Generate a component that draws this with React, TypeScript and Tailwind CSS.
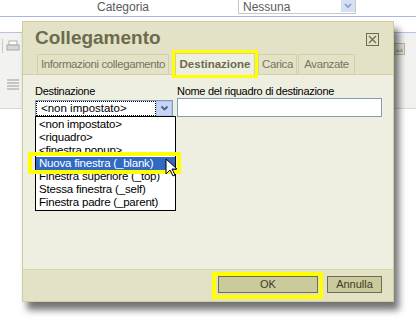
import { ReactNode } from 'react';

const ui = { fontFamily: '"Liberation Sans", Arial, sans-serif' };

function Tab({ children, active, w }: { children: ReactNode; active?: boolean; w: string }) {
    if (active) {
        return (
            <div
                className={`relative h-[22px] ${w} flex items-center justify-center bg-[#efefe1] border border-b-0 border-[#d3d2a6] text-[11.5px] font-bold text-[#6b6b4d] outline-[3px] outline-[#ffff00] -mb-px`}
            >
                {children}
            </div>
        );
    }
    return (
        <div
            className={`h-[20px] ${w} flex items-center justify-center bg-[#e3e2c7] border border-b-0 border-[#d3d2a6] text-[11.5px] tracking-[-0.4px] text-[#75755f]`}
        >
            {children}
        </div>
    );
}

const options = [
    '<non impostato>',
    '<riquadro>',
    '<finestra popup>',
    'Nuova finestra (_blank)',
    'Finestra superiore (_top)',
    'Stessa finestra (_self)',
    'Finestra padre (_parent)',
];

export default function App() {
    return (
        <div className="relative w-[416px] h-[330px] overflow-hidden bg-white" style={ui}>
            {/* page behind the dialog */}
            <div className="h-[17px] flex items-start border-b border-[#a9b6e2]">
                <div className="w-[238px] pl-[97px] pt-[1px] text-[12px] leading-[12px] text-[#5a5a5a]">Categoria</div>
                <div className="w-[118px] h-[14px] flex border border-[#c8c8c8] border-t-0">
                    <div className="flex-1 pl-[4px] pt-[1px] text-[12px] leading-[12px] text-[#5a5a5a]">Nessuna</div>
                    <div className="w-[14px] h-[12px] bg-[#d6e0f5] flex items-center justify-center">
                        <svg width="8" height="6" viewBox="0 0 8 6">
                            <path d="M1 1l3 3 3-3" stroke="#8a9ac0" strokeWidth="1.6" fill="none" />
                        </svg>
                    </div>
                </div>
            </div>
            <div className="h-[16px] border-b border-[#b8c2e8]" />
            <div className="h-[76px] bg-[#f2f2f0] border-b border-[#d8d8d8] flex">
                <div className="flex flex-col gap-[14px] pl-[2px] pt-[6px]">
                    <div className="flex items-center gap-[3px]">
                        <div className="w-px h-[14px] bg-[#c8c8c8]" />
                        <svg width="14" height="12" viewBox="0 0 14 12">
                            <rect x="3" y="1" width="8" height="4" fill="#fff" stroke="#b0b0b0" />
                            <rect x="1" y="5" width="12" height="5" fill="#d8d8d8" stroke="#a8a8a8" />
                        </svg>
                    </div>
                    <svg width="14" height="12" viewBox="0 0 14 12" className="ml-[4px] mt-[12px]">
                        <path d="M1 1h12M1 4h12M1 7h12M1 10h12" stroke="#9a9a9a" />
                    </svg>
                </div>
                <div className="flex-1" />
                <svg width="12" height="12" viewBox="0 0 12 12" className="mt-[10px] mr-[11px]">
                    <rect x="0.5" y="0.5" width="11" height="11" fill="#e2e2d8" stroke="#b8b8b0" />
                    <path d="M2 9l3-3 2 2 2-3 1 4z" fill="#a8b89a" />
                </svg>
            </div>

            {/* dialog */}
            <div className="absolute left-[22px] top-[21px] w-[372px] h-[281px] flex flex-col bg-[#e3e2c7] border border-[#cfcd9c] shadow-[5px_8px_7px_rgba(0,0,0,0.55)]">
                <div className="h-[31px] flex items-start justify-between pl-[12px] pr-[14px] pt-[5px]">
                    <div className="text-[19px] leading-[22px] font-bold text-[#6b6b4d]">Collegamento</div>
                    <svg width="13" height="13" viewBox="0 0 13 13" className="mt-[6px]">
                        <rect x="0.5" y="0.5" width="12" height="12" fill="none" stroke="#6b6b4d" />
                        <path d="M3 3l7 7M10 3l-7 7" stroke="#6b6b4d" strokeWidth="1.2" />
                    </svg>
                </div>
                <div className="h-[22px] flex items-end gap-[6px] pl-[14px] border-b border-[#d3d2a6]">
                    <Tab w="w-[132px]">Informazioni collegamento</Tab>
                    <div className="flex items-end gap-[3px]">
                        <Tab w="w-[80px]" active>
                            Destinazione
                        </Tab>
                        <div className="flex items-end gap-px">
                            <Tab w="w-[39px]">Carica</Tab>
                            <Tab w="w-[57px]">Avanzate</Tab>
                        </div>
                    </div>
                </div>
                <div className="flex-1 bg-[#efefe1] flex gap-[4px] pl-[12px] pt-[9px] text-[11px] text-black">
                    <div className="w-[138px] flex flex-col">
                        <div className="leading-[14px] tracking-[-0.3px]">Destinazione</div>
                        <div className="relative mt-[2px] h-[17px] flex border border-[#7f9db9] bg-white">
                            <div className="flex-1 flex items-center pl-[4px] border border-dotted border-black text-[11.5px] leading-[13px]">
                                &lt;non impostato&gt;
                            </div>
                            <div className="w-[16px] bg-[#c6d4f7] border border-[#b4c6ef] flex items-center justify-center">
                                <svg width="9" height="7" viewBox="0 0 9 7">
                                    <path d="M1.5 1.5l3 3 3-3" stroke="#4d6185" strokeWidth="1.8" fill="none" />
                                </svg>
                            </div>
                            <div className="absolute left-[-1px] top-full w-[141px] bg-white border border-black py-px">
                                {options.map((o, i) =>
                                    i === 3 ? (
                                        <div key={o} className="relative h-[13px] bg-[#316ac5] text-white pl-[3px] text-[11.5px] leading-[13px] tracking-[-0.2px]">
                                            {o}
                                            <span className="absolute -left-[8px] -right-[6px] -top-[5px] -bottom-[4px] border-4 border-[#ffff00]" />
                                            <svg width="12" height="20" viewBox="0 0 12 20" className="absolute left-[129px] top-[1px]">
                                                <path d="M1 1v15l4-4 3 6 2-1-3-6h5z" fill="#fff" stroke="#000" strokeWidth="1" />
                                            </svg>
                                        </div>
                                    ) : (
                                        <div key={o} className="h-[13px] pl-[3px] text-[11.5px] leading-[13px] tracking-[-0.2px]">
                                            {o}
                                        </div>
                                    ),
                                )}
                            </div>
                        </div>
                    </div>
                    <div className="w-[205px] flex flex-col">
                        <div className="leading-[14px] tracking-[-0.3px]">Nome del riquadro di destinazione</div>
                        <div className="h-[19px] bg-white border border-[#7f9db9]" />
                    </div>
                </div>
                <div className="h-[32px] flex items-start justify-end gap-[9px] pr-[11px] pt-[6px] border-t border-[#d6d5aa]">
                    <div className="relative w-[100px] h-[17px] flex items-center justify-center bg-[#cbca9a] border border-[#6e6e55] text-[11px] text-[#3a3a2a]">
                        OK
                        <span className="absolute -left-[7px] -right-[6px] -top-[5px] -bottom-[7px] border-4 border-[#ffff00]" />
                    </div>
                    <div className="w-[55px] h-[17px] flex items-center justify-center bg-[#cbca9a] border border-[#6e6e55] text-[11px] text-[#3a3a2a]">
                        Annulla
                    </div>
                </div>
            </div>
        </div>
    );
}
